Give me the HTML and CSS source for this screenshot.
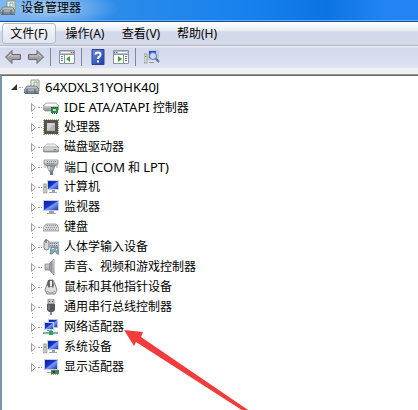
FILE: index.html
```html
<!DOCTYPE html>
<html lang="zh-CN">
<head>
<meta charset="utf-8">
<title>设备管理器</title>
<link rel="stylesheet" href="styles.css">
</head>
<body>
<svg class="defs" aria-hidden="true">
  <defs>
    <linearGradient id="metal" x1="0" y1="0" x2="0" y2="1"><stop offset="0" stop-color="#f4f5f6"/><stop offset="1" stop-color="#858b90"/></linearGradient>
    <linearGradient id="screen" x1="0" y1="0" x2="1" y2="1"><stop offset="0" stop-color="#0a1fa0"/><stop offset=".45" stop-color="#1a38cc"/><stop offset=".55" stop-color="#7d9cf0"/><stop offset="1" stop-color="#1736c4"/></linearGradient>
    <linearGradient id="help" x1="0" y1="0" x2="1" y2="1"><stop offset="0" stop-color="#6b8de0"/><stop offset="1" stop-color="#1c3ba6"/></linearGradient>
    <symbol id="i-host" viewBox="0 0 16 16">
      <path d="M7 8V1h8v11h-2" fill="#eef4ea" stroke="#8b9a8c"/><path d="M10 3h3v5h-3z" fill="#fff" stroke="#86a588"/>
      <path d="M3 7h9l3 3H1z" fill="#b9c3c9" stroke="#78838a"/><path d="M0 10h15v4H0z" fill="#7e8b93"/><path d="M1 11h13" stroke="#c5ced3"/><path d="M3 10v4M11 10v4" stroke="#4d575d"/><path d="M1 14.500h14" stroke="#626c72"/>
    </symbol>
    <symbol id="i-ide" viewBox="0 0 16 16">
      <path d="M3 4h10l3 3v3l-2 2H2l-2-2V7z" fill="url(#metal)" stroke="#8b9094" stroke-width=".7"/><path d="M3 5h10l1 2H2z" fill="#fff"/>
      <path d="M8 8h7v6H8z" fill="#2d8748"/><path d="M10 10h3v2h-3z" fill="#b9dfb9"/><path d="M9 14.500h6M8 8.500h7" stroke="#175e31" stroke-dasharray="1 1"/>
    </symbol>
    <symbol id="i-cpu" viewBox="0 0 16 16">
      <path d="M.5 1v15M1 15.500h15M15.500 1v15M1 .5h15" stroke="#b09a66" stroke-dasharray="1 1"/>
      <path d="M1 1h14v14H1z" fill="#55544f"/><path d="M4 4h8v8H4z" fill="#b4b7ba"/><path d="M4 4h8l-8 8z" fill="#cfd1d3"/>
    </symbol>
    <symbol id="i-disk" viewBox="0 0 16 16">
      <path d="M4 5h8l4 4H0z" fill="#f0f1f2" stroke="#a1a5a8" stroke-width=".7"/><rect y="8" width="16" height="5" rx="1.500" fill="url(#metal)" stroke="#797e82" stroke-width=".7"/><path d="M11 10h2v1h-2z" fill="#38a93c"/><path d="M2 11h8" stroke="#d7dadc"/>
    </symbol>
    <symbol id="i-port" viewBox="0 0 16 16">
      <path d="M1 1h14v4l-3 2H4L1 5z" fill="url(#metal)" stroke="#777d81" stroke-width=".7"/><path d="M4 2.500h9M4 4.500h8" stroke="#7a7f83" stroke-dasharray="1 1"/><path d="M4 7h8l-2 5H6z" fill="#a4aaad" stroke="#73797d" stroke-width=".7"/><path d="M7 12h3v4H7z" fill="#777d82"/><path d="M2 6v3M14 6v3" stroke="#9ca1a5"/><path d="M6 7v4" stroke="#e8eaeb"/>
    </symbol>
    <symbol id="i-computer" viewBox="0 0 16 16">
      <path d="M0 5h4v9H0z" fill="#c9cbbd" stroke="#969987" stroke-width=".7"/><path d="M1 8h2" stroke="#58a14b"/>
      <path d="M4 1h12v10H4z" fill="#c9d2e0"/><path d="M5 2h10v8H5z" fill="url(#screen)"/><path d="M9 11h3v2h2v1H6v-1h3z" fill="#9ca3aa"/>
    </symbol>
    <symbol id="i-monitor" viewBox="0 0 16 16">
      <path d="M0 1h16v11H0z" fill="#c3cbdc"/><path d="M1 2h14v9H1z" fill="url(#screen)"/><path d="M6 12h5v2h2v1H4v-1h2z" fill="#9ba1a7"/>
    </symbol>
    <symbol id="i-keyboard" viewBox="0 0 16 16">
      <path d="M3 5h10l3 4v3H0V9z" fill="#d6d8da" stroke="#8d9195" stroke-width=".8"/><path d="M4 6.500h9M3 8.500h11M2 10.500h12" stroke="#888d91" stroke-dasharray="1 1"/>
    </symbol>
    <symbol id="i-hid" viewBox="0 0 16 16">
      <rect x="1" y="1" width="5" height="10" rx="2.500" fill="#d7dadd" stroke="#62686d" stroke-width=".8"/><path d="M3 0v4" stroke="#4c5257"/>
      <path d="M6 3h10v5H6z" fill="#c7cace" stroke="#91969b" stroke-width=".7"/><path d="M7 4.500h8M7 6.500h8" stroke="#777c81" stroke-dasharray="1 1"/>
      <path d="M8 8h7l1 7h-2l-2-3-3 3H7z" fill="#82a9b4" stroke="#567681" stroke-width=".7"/><path d="M9 9.500h2M13 10.500h1" stroke="#e1f2f5"/>
    </symbol>
    <symbol id="i-sound" viewBox="0 0 16 16">
      <path d="M2 5h4l5-5v16l-5-5H2z" fill="url(#metal)" stroke="#70767b" stroke-width=".7"/><path d="M6 5l4-4v14l-4-4z" fill="#929a9e"/><path d="M10 1v14" stroke="#c1c5c8"/>
    </symbol>
    <symbol id="i-mouse" viewBox="0 0 16 16">
      <path d="M6 1h4l2 4 2 6-2 4H4l-2-4 2-6z" fill="#dedfe1" stroke="#6b6e71" stroke-width=".8"/><path d="M5 1h5l1 5-1 3-2-2-2 2-2-3z" fill="#626568"/><path d="M7 2h2v5H7z" fill="#f2f3f3"/><path d="M4 12q4 4 8 0" fill="none" stroke="#96999b"/>
    </symbol>
    <symbol id="i-usb" viewBox="0 0 16 16">
      <path d="M5 0h6v5H5z" fill="#c8cacc" stroke="#75797c" stroke-width=".8"/><path d="M6 2h1v1H6zM9 2h1v1H9z" fill="#555"/><path d="M4 5h8v6l-2 2H6l-2-2z" fill="#54585b"/><path d="M7 13h2v3H7z" fill="#85898c"/><path d="M6 6v5" stroke="#92979a"/>
    </symbol>
    <symbol id="i-network" viewBox="0 0 16 16">
      <path d="M5 0h10v9H5z" fill="#b5c5df"/><path d="M6 1h8v7H6z" fill="url(#screen)"/><path d="M1 3h10v8H1z" fill="#c9d6e7"/><path d="M2 4h8v6H2z" fill="url(#screen)"/><path d="M4 11h5v1H4z" fill="#9aa1a7"/>
      <path d="M0 14h15M8 11v3" stroke="#74b99a" stroke-width="2"/><path d="M6 12h4v4H6z" fill="#29a566"/>
    </symbol>
    <symbol id="i-display" viewBox="0 0 16 16">
      <path d="M1 0h14v11H1z" fill="#c6cfdf"/><path d="M2 1h12v9H2z" fill="url(#screen)"/><path d="M6 11h3v2H4v1h5v-3z" fill="#a0a6ab"/><path d="M8 11h8v4H8z" fill="#46855a"/><path d="M10 12h2v2h-2z" fill="#233f30"/><path d="M8 15.500h7" stroke="#a69a59" stroke-dasharray="1 1"/>
    </symbol>
    <symbol id="i-arrow" viewBox="0 0 16 14">
      <path d="M.5 7L7 .5v4h8.500v5H7v4z" fill="#a0a1a4" stroke="#68696d"/><path d="M3 7l3-3v2h8" fill="none" stroke="#c9cacd"/>
    </symbol>
    <symbol id="i-panel" viewBox="0 0 16 14">
      <path d="M.5.5h15v13H.5z" fill="#fff" stroke="#8b939d"/><path d="M1 1h14v3H1z" fill="#b9c2cb"/><path d="M2 2.500h9" stroke="#fff"/><path d="M12 2.500h3" stroke="#63717e" stroke-dasharray="1 1"/><path d="M1 4.500h14M5.500 5v8" stroke="#8d98a2"/><path d="M2 6.500h2M2 8.500h2M2 10.500h2" stroke="#5d7c9c"/><path d="M11 6v6L7 9z" fill="#3ca32d"/>
    </symbol>
    <symbol id="i-help" viewBox="0 0 13 16">
      <path d="M.5.5h12v15H.5z" fill="url(#help)" stroke="#284294"/><path d="M4 5.500q0-2 2.500-2t2.500 2q0 1.500-1.500 2.500-1 .5-1 2" fill="none" stroke="#fff" stroke-width="2"/><path d="M5.500 11.500h2v2h-2z" fill="#fff"/>
    </symbol>
    <symbol id="i-scan" viewBox="0 0 16 14">
      <path d="M0 4h3v9H0z" fill="#dadccf" stroke="#85877a" stroke-width=".7"/><path d="M1 6.500h1" stroke="#379c32"/><path d="M4 0h11v10H4z" fill="#bdcbe0"/><path d="M5 1h7v7H5z" fill="#304fc1"/><circle cx="9" cy="6" r="3.500" fill="#c8dcf3" stroke="#607ba5"/><path d="M11.500 8.500L15 12" stroke="#526f9c" stroke-width="2"/><path d="M5 12.500h5" stroke="#9298a0"/>
    </symbol>
  </defs>
</svg>
<div class="window">
  <header class="titlebar"><svg class="icon"><use href="#i-host"/></svg><h1 class="title">设备管理器</h1></header>
  <nav class="menubar">
    <button class="menu menu-active">文件(F)</button><button class="menu">操作(A)</button><button class="menu">查看(V)</button><button class="menu">帮助(H)</button>
  </nav>
  <div class="toolbar" role="toolbar">
    <button class="tool" aria-label="后退"><svg class="tool-icon"><use href="#i-arrow"/></svg></button>
    <button class="tool" aria-label="前进"><svg class="tool-icon flip"><use href="#i-arrow"/></svg></button>
    <span class="sep"></span>
    <button class="tool" aria-label="显示/隐藏控制台树"><svg class="tool-icon"><use href="#i-panel"/></svg></button>
    <span class="sep"></span>
    <button class="tool" aria-label="帮助"><svg class="tool-icon"><use href="#i-help"/></svg></button>
    <button class="tool" aria-label="显示/隐藏操作窗格"><svg class="tool-icon flip"><use href="#i-panel"/></svg></button>
    <span class="sep"></span>
    <button class="tool" aria-label="扫描检测硬件改动"><svg class="tool-icon"><use href="#i-scan"/></svg></button>
  </div>
  <main class="pane">
    <div class="row root"><button class="expander" aria-label="折叠"><svg class="chevron"><path d="M7 1v6H1z" fill="#333"/></svg></button><span class="dots"></span><svg class="icon"><use href="#i-host"/></svg><span class="label"><span class="latin">64XDXL31YOHK40J</span></span></div>
    <ul class="tree">
      <li class="row"><button class="expander" aria-label="展开"><svg class="chevron"><path d="M2.500.5l4 4-4 4z" fill="#fff" stroke="#a0a0a0"/></svg></button><span class="dots"></span><svg class="icon"><use href="#i-ide"/></svg><span class="label"><span class="latin">IDE ATA/ATAPI</span> 控制器</span></li>
      <li class="row"><button class="expander" aria-label="展开"><svg class="chevron"><path d="M2.500.5l4 4-4 4z" fill="#fff" stroke="#a0a0a0"/></svg></button><span class="dots"></span><svg class="icon"><use href="#i-cpu"/></svg><span class="label">处理器</span></li>
      <li class="row"><button class="expander" aria-label="展开"><svg class="chevron"><path d="M2.500.5l4 4-4 4z" fill="#fff" stroke="#a0a0a0"/></svg></button><span class="dots"></span><svg class="icon"><use href="#i-disk"/></svg><span class="label">磁盘驱动器</span></li>
      <li class="row"><button class="expander" aria-label="展开"><svg class="chevron"><path d="M2.500.5l4 4-4 4z" fill="#fff" stroke="#a0a0a0"/></svg></button><span class="dots"></span><svg class="icon"><use href="#i-port"/></svg><span class="label">端口 <span class="latin">(COM</span> 和 <span class="latin">LPT)</span></span></li>
      <li class="row"><button class="expander" aria-label="展开"><svg class="chevron"><path d="M2.500.5l4 4-4 4z" fill="#fff" stroke="#a0a0a0"/></svg></button><span class="dots"></span><svg class="icon"><use href="#i-computer"/></svg><span class="label">计算机</span></li>
      <li class="row"><button class="expander" aria-label="展开"><svg class="chevron"><path d="M2.500.5l4 4-4 4z" fill="#fff" stroke="#a0a0a0"/></svg></button><span class="dots"></span><svg class="icon"><use href="#i-monitor"/></svg><span class="label">监视器</span></li>
      <li class="row"><button class="expander" aria-label="展开"><svg class="chevron"><path d="M2.500.5l4 4-4 4z" fill="#fff" stroke="#a0a0a0"/></svg></button><span class="dots"></span><svg class="icon"><use href="#i-keyboard"/></svg><span class="label">键盘</span></li>
      <li class="row"><button class="expander" aria-label="展开"><svg class="chevron"><path d="M2.500.5l4 4-4 4z" fill="#fff" stroke="#a0a0a0"/></svg></button><span class="dots"></span><svg class="icon"><use href="#i-hid"/></svg><span class="label">人体学输入设备</span></li>
      <li class="row"><button class="expander" aria-label="展开"><svg class="chevron"><path d="M2.500.5l4 4-4 4z" fill="#fff" stroke="#a0a0a0"/></svg></button><span class="dots"></span><svg class="icon"><use href="#i-sound"/></svg><span class="label">声音、视频和游戏控制器</span></li>
      <li class="row"><button class="expander" aria-label="展开"><svg class="chevron"><path d="M2.500.5l4 4-4 4z" fill="#fff" stroke="#a0a0a0"/></svg></button><span class="dots"></span><svg class="icon"><use href="#i-mouse"/></svg><span class="label">鼠标和其他指针设备</span></li>
      <li class="row"><button class="expander" aria-label="展开"><svg class="chevron"><path d="M2.500.5l4 4-4 4z" fill="#fff" stroke="#a0a0a0"/></svg></button><span class="dots"></span><svg class="icon"><use href="#i-usb"/></svg><span class="label">通用串行总线控制器</span></li>
      <li class="row"><button class="expander" aria-label="展开"><svg class="chevron"><path d="M2.500.5l4 4-4 4z" fill="#fff" stroke="#a0a0a0"/></svg></button><span class="dots"></span><svg class="icon"><use href="#i-network"/></svg><span class="label">网络适配器</span>
        <svg class="pointer" viewBox="0 0 130 84" aria-hidden="true"><path d="M0 0l19 2-2 5 113 77h-6L12 12l-2 4z" fill="#f23b3b"/></svg></li>
      <li class="row"><button class="expander" aria-label="展开"><svg class="chevron"><path d="M2.500.5l4 4-4 4z" fill="#fff" stroke="#a0a0a0"/></svg></button><span class="dots"></span><svg class="icon"><use href="#i-computer"/></svg><span class="label">系统设备</span></li>
      <li class="row"><button class="expander" aria-label="展开"><svg class="chevron"><path d="M2.500.5l4 4-4 4z" fill="#fff" stroke="#a0a0a0"/></svg></button><span class="dots"></span><svg class="icon"><use href="#i-display"/></svg><span class="label">显示适配器</span></li>
    </ul>
  </main>
</div>
</body>
</html>
```
FILE: styles.css
```css
* { box-sizing: border-box; }
body { margin: 0; overflow: hidden; color: #000; font: 12px/20px "Noto Sans", "Noto Sans CJK SC", sans-serif; }
button { font: inherit; color: inherit; background: none; border: 0; padding: 0; margin: 0; }
svg { display: block; flex: none; }
.defs { position: absolute; width: 0; height: 0; }
.window { min-height: 100vh; display: flex; flex-direction: column; }
.icon { width: 16px; height: 16px; }

.titlebar {
  display: flex; gap: 5px; height: 22px; padding-bottom: 6px; align-items: center;
  background: radial-gradient(ellipse 70px 20px at 50px 8px, #b2d0ee, #8dbcee99 50%, transparent), linear-gradient(90deg, #78b6f2, #2d8ce9 24%, #1681ee 60%, #0c74e2 78%, #2184f2 92%);
  border-bottom: 1px solid #174f96;
  box-shadow: inset 0 -1px #65aef4;
}
.title { margin: 0; font: inherit; line-height: 14px; }

.menubar {
  display: flex; gap: 2px; height: 24px; padding: 1px 2px;
  background: linear-gradient(#fff, #e9eef6 38%, #d4daea 42%, #d4d9ea);
  border-bottom: 1px solid #b3b7c5;
}
.menu { height: 21px; width: 54px; border: 1px solid transparent; border-radius: 3px; line-height: 20px; }
.menu-active { background: linear-gradient(#f8f9fc, #e0e4f0); border-color: #b5bac9; }

.toolbar {
  display: flex; align-items: center; gap: 4px; height: 23px; padding: 0 3px;
  background: linear-gradient(#f8f9fd, #d3d8ea 2px, #dfe3f4);
  border-bottom: 1px solid #b4b8c6;
}
.tool { width: 19px; height: 20px; display: grid; place-items: center; }
.tool-icon { width: 16px; height: 16px; }
.flip { transform: scaleX(-1); }
.sep { width: 1px; height: 18px; background: #80879a; margin: 0 2px 0 1px; }

.pane {
  flex: 1; border-left: 2px solid #7497ae; background: #fff; padding-top: 1px;
  border-top: 1px solid #676767; margin-top: 6px; box-shadow: 0 -1px #999, 0 -7px #f0f0f0;
}
.row { display: flex; align-items: center; height: 20px; position: relative; }
.root { padding-left: 7px; }
.tree {
  list-style: none; margin: 0; padding: 0 0 0 26px;
  background: linear-gradient(#aaa 1px, transparent 1px) 30px 0 / 1px 4px repeat-y;
}
.row:last-child { background: #fff; }
.expander { width: 10px; height: 12px; display: grid; place-items: center; background: #fff; }
.chevron { width: 9px; height: 9px; }
.dots { width: 4px; margin-right: 1px; border-top: 1px dotted #999; }
.label { margin-left: 5px; white-space: nowrap; }
.latin { font-size: 13px; }
.pointer { position: absolute; left: 96px; top: 13px; width: 130px; height: 84px; pointer-events: none; z-index: 1; }
```
